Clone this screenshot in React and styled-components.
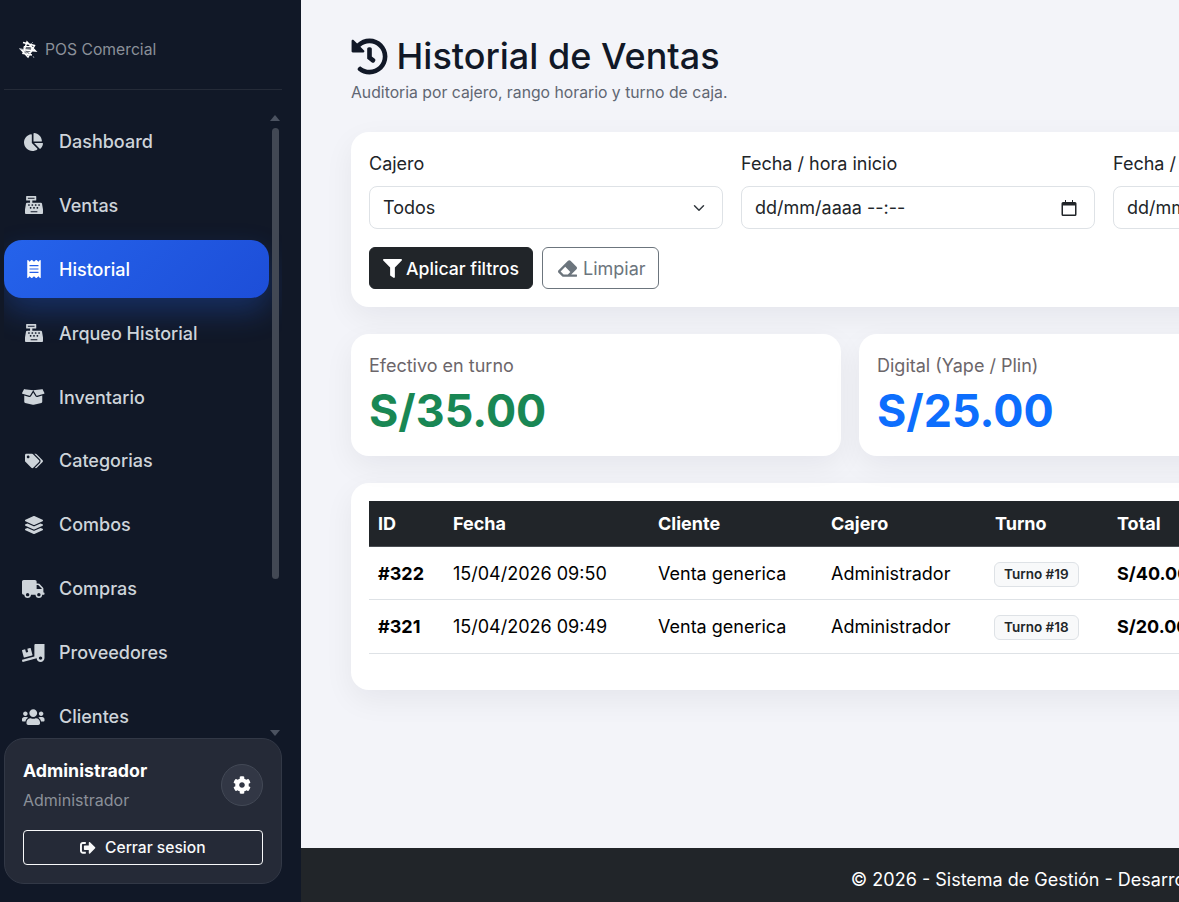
import React from 'react';
import styled, { createGlobalStyle } from 'styled-components';
import {
  FaChartPie, FaCashRegister, FaReceipt, FaBoxOpen, FaTags, FaLayerGroup, FaTruck,
  FaTruckLoading, FaUsers, FaCog, FaSignOutAlt, FaFilter, FaEraser, FaHistory,
} from 'react-icons/fa';

const GlobalStyle = createGlobalStyle`
  * { box-sizing: border-box; }
  html, body { margin: 0; height: 100%; overflow: hidden; }
  body {
    font-family: Inter, "Liberation Sans", sans-serif;
    font-size: 18px;
    background: #f3f4f9;
    color: #212529;
  }
  #root { height: 100vh; overflow: hidden; }
`;

const Shell = styled.div`
  display: flex;
  width: 1907px;
  height: 902px;
`;

const Sidebar = styled.aside`
  width: 301px;
  flex-shrink: 0;
  height: 100%;
  display: flex;
  flex-direction: column;
  background: #111827;
  padding: 0 19px 18px 4px;
`;

const Brand = styled.div`
  height: 90px;
  flex-shrink: 0;
  display: flex;
  align-items: center;
  gap: 7px;
  padding: 10px 0 0 14px;
  border-bottom: 1px solid #252b38;
  font-size: 15.7px;
  color: #8b9099;
  svg { flex-shrink: 0; }
`;

const NavArea = styled.div`
  position: relative;
  flex: 1;
  min-height: 0;
`;

const NavList = styled.nav`
  height: 100%;
  overflow: hidden;
  padding: 22.6px 13px 0 0;
  display: flex;
  flex-direction: column;
  gap: 6px;
`;

const NavItem = styled.a`
  flex-shrink: 0;
  height: 57.9px;
  display: flex;
  align-items: center;
  gap: 15px;
  padding-left: 19px;
  border-radius: 18px;
  font-size: 18px;
  font-weight: 500;
  color: ${(props) => (props.$active ? '#ffffff' : '#ced4da')};
  background: ${(props) => (props.$active ? 'linear-gradient(135deg, #2563eb, #1d4ed8)' : 'transparent')};
  box-shadow: ${(props) => (props.$active ? '0 14px 30px rgba(37, 99, 235, 0.3)' : 'none')};
`;

const NavIcon = styled.span`
  width: 21px;
  display: flex;
  justify-content: center;
  svg { flex-shrink: 0; height: 18px; width: ${(props) => props.$w || 18}px; }
`;

const ScrollArrow = styled.span`
  position: absolute;
  right: 2px;
  top: ${(props) => (props.$down ? '640px' : '25px')};
  width: 0;
  height: 0;
  border-left: 5px solid transparent;
  border-right: 5px solid transparent;
  border-${(props) => (props.$down ? 'top' : 'bottom')}: 6px solid #4b5260;
`;

const ScrollThumb = styled.span`
  position: absolute;
  right: 3px;
  top: 38px;
  width: 7px;
  height: 451px;
  border-radius: 4px;
  background: #424854;
`;

const UserCard = styled.div`
  flex-shrink: 0;
  height: 146px;
  padding: 21px 18px 18px;
  border: 1px solid #323846;
  border-radius: 20px;
  background: #252a37;
`;

const UserRow = styled.div`
  display: flex;
  justify-content: space-between;
  align-items: center;
  margin-bottom: 20px;
`;

const UserName = styled.div`
  font-size: 17.8px;
  font-weight: 700;
  color: #ffffff;
  margin-bottom: 9px;
`;

const UserRole = styled.div`
  font-size: 16px;
  color: #8b9099;
`;

const GearButton = styled.span`
  width: 42px;
  height: 42px;
  display: flex;
  align-items: center;
  justify-content: center;
  border: 1px solid #434956;
  border-radius: 50%;
  background: #323745;
  color: #ffffff;
  font-size: 18px;
`;

const LogoutButton = styled.button`
  width: 100%;
  height: 35px;
  display: flex;
  align-items: center;
  justify-content: center;
  gap: 9px;
  border: 1px solid #f8f9fa;
  border-radius: 4px;
  background: transparent;
  color: #f8f9fa;
  font: 500 15.6px Inter, sans-serif;
`;

const Main = styled.main`
  flex: 1;
  min-width: 0;
  display: flex;
  flex-direction: column;
`;

const Content = styled.div`
  flex: 1;
  padding: 32px 50px 0;
`;

const Title = styled.h1`
  margin: 0;
  display: flex;
  align-items: center;
  gap: 9px;
  font-size: 36px;
  line-height: 49px;
  font-weight: 500;
  color: #111827;
  svg { width: 37px; height: 37px; margin-left: -0.5px; }
`;

const Subtitle = styled.p`
  margin: 0 0 27px;
  font-size: 15.75px;
  line-height: 24px;
  color: #5f6672;
`;

const Card = styled.section`
  background: #ffffff;
  border-radius: 18px;
  padding: 18px;
  box-shadow: 0 10px 30px rgba(15, 23, 42, 0.06);
`;

const FilterCard = styled(Card)`
  margin-bottom: 27px;
`;

const StatCard = styled(Card)`
  padding-bottom: 14px;
`;

const FilterGrid = styled.div`
  display: grid;
  grid-template-columns: repeat(4, 354px);
  gap: 18px;
  margin-bottom: 18px;
`;

const Label = styled.label`
  display: block;
  font-size: 18px;
  line-height: 27px;
  margin-bottom: 9px;
  color: #212529;
`;

const Select = styled.select`
  width: 100%;
  height: 43px;
  padding: 0 13px;
  appearance: none;
  border: 1px solid #dee2e6;
  border-radius: 8px;
  color: #212529;
  font: 400 18px Inter, sans-serif;
  background: #ffffff url("data:image/svg+xml,%3csvg xmlns='http://www.w3.org/2000/svg' viewBox='0 0 16 16'%3e%3cpath fill='none' stroke='%23343a40' stroke-linecap='round' stroke-linejoin='round' stroke-width='2' d='m2 5 6 6 6-6'/%3e%3c/svg%3e") no-repeat right 15px center / 16px 12px;
`;

const DateField = styled.div`
  height: 43px;
  display: flex;
  align-items: center;
  justify-content: space-between;
  padding: 0 17px 0 13px;
  border: 1px solid #dee2e6;
  border-radius: 8px;
  font-size: 18px;
  color: #212529;
  white-space: nowrap;
`;

const Actions = styled.div`
  display: flex;
  gap: 9px;
`;

const Button = styled.button`
  height: 42px;
  display: flex;
  align-items: center;
  gap: ${(props) => (props.$outline ? 6 : 4)}px;
  padding: ${(props) => (props.$outline ? '0 12px 0 15px' : '0 13px')};
  border: 1px solid ${(props) => (props.$outline ? '#6c757d' : '#212529')};
  border-radius: 6px;
  background: ${(props) => (props.$outline ? 'transparent' : '#212529')};
  color: ${(props) => (props.$outline ? '#6c757d' : '#ffffff')};
  font: ${(props) => (props.$outline ? '400 18px' : '500 17.7px')} Inter, sans-serif;
  svg { width: 19px; height: 19px; }
`;

const StatGrid = styled.div`
  display: grid;
  grid-template-columns: repeat(3, 490px);
  gap: 18px;
  margin-bottom: 27px;
`;

const StatLabel = styled.div`
  font-size: 18px;
  line-height: 28px;
  color: #6c666a;
`;

const StatValue = styled.div`
  font-size: 44.8px;
  line-height: 62px;
  font-weight: 700;
  color: ${(props) => props.$color};
`;

const Table = styled.table`
  width: 100%;
  border-collapse: collapse;
  table-layout: fixed;
  margin-bottom: 18px;
  font-size: 18px;
`;

const Th = styled.th`
  width: ${(props) => (props.$w ? `${props.$w}px` : 'auto')};
  height: 45px;
  padding: 0 9px;
  text-align: left;
  font-weight: 700;
  color: #ffffff;
  background: #212529;
  border-bottom: 1px solid #4a4e53;
`;

const Td = styled.td`
  height: ${(props) => props.$h}px;
  padding: 1px 9px 0;
  color: #000000;
  font-weight: ${(props) => (props.$bold ? 700 : 400)};
  border-bottom: 1px solid #dee2e6;
  white-space: nowrap;
`;

const Badge = styled.span`
  display: inline-block;
  height: 25px;
  line-height: 23px;
  padding: 0 9px;
  margin: 2px 0 0 -1px;
  border: 1px solid #dee2e6;
  border-radius: 6px;
  background: #f8f9fa;
  color: #212529;
  font-size: 13.5px;
  font-weight: 600;
  vertical-align: middle;
`;

const Footer = styled.footer`
  height: 54px;
  flex-shrink: 0;
  display: flex;
  align-items: center;
  justify-content: center;
  padding: 8px 0 0 8px;
  background: #212529;
  color: #ffffff;
  font-size: 18px;
  white-space: nowrap;
`;

const LogoMark = () => (
  <svg width="20" height="20" viewBox="0 0 20 20" fill="none" stroke="#ffffff" strokeWidth="1.5">
    <path d="M5 2.5 16.5 5.5 10 17 3 9.5 17.5 11 9 2 5 13.5 14 15" />
    <path d="M6 6.5h7l1 5-5 2-3-3Z" fill="#ffffff" fillOpacity="0.35" strokeWidth="1" />
    <path d="M1 8.5 6 10M13 4l2-2M15 16l1 2" strokeWidth="0.8" stroke="#9aa0aa" />
  </svg>
);

const CalendarIcon = () => (
  <svg width="16" height="16" viewBox="0 0 16 16" fill="#212529">
    <path d="M4 0h1v2h6V0h1v2h2a1.5 1.5 0 0 1 1.5 1.5v11A1.5 1.5 0 0 1 14 16H2a1.5 1.5 0 0 1-1.5-1.5v-11A1.5 1.5 0 0 1 2 2h2V0Zm-2 5.5v9h12v-9H2Z" />
  </svg>
);

const navLinks = [
  { label: 'Dashboard', icon: FaChartPie, w: 19 },
  { label: 'Ventas', icon: FaCashRegister },
  { label: 'Historial', icon: FaReceipt, active: true },
  { label: 'Arqueo Historial', icon: FaCashRegister },
  { label: 'Inventario', icon: FaBoxOpen, w: 22.5 },
  { label: 'Categorias', icon: FaTags },
  { label: 'Combos', icon: FaLayerGroup },
  { label: 'Compras', icon: FaTruck, w: 22.5 },
  { label: 'Proveedores', icon: FaTruckLoading, w: 22.5 },
  { label: 'Clientes', icon: FaUsers, w: 22.5 },
];

const sales = [
  { id: '#322', date: '15/04/2026 09:50', shift: 'Turno #19', total: 'S/40.00', h: 53 },
  { id: '#321', date: '15/04/2026 09:49', shift: 'Turno #18', total: 'S/20.00', h: 54 },
];

const App = () => {
  return (
    <Shell>
      <GlobalStyle />
      <Sidebar>
        <Brand>
          <LogoMark />
          POS Comercial
        </Brand>
        <NavArea>
          <NavList>
            {navLinks.map(({ label, icon: Icon, active, w }) => (
              <NavItem key={label} $active={active}>
                <NavIcon $w={w}><Icon /></NavIcon>
                {label}
              </NavItem>
            ))}
          </NavList>
          <ScrollArrow />
          <ScrollThumb />
          <ScrollArrow $down />
        </NavArea>
        <UserCard>
          <UserRow>
            <div>
              <UserName>Administrador</UserName>
              <UserRole>Administrador</UserRole>
            </div>
            <GearButton><FaCog /></GearButton>
          </UserRow>
          <LogoutButton><FaSignOutAlt /> Cerrar sesion</LogoutButton>
        </UserCard>
      </Sidebar>

      <Main>
        <Content>
          <Title><FaHistory /> Historial de Ventas</Title>
          <Subtitle>Auditoria por cajero, rango horario y turno de caja.</Subtitle>

          <FilterCard>
            <FilterGrid>
              <div>
                <Label>Cajero</Label>
                <Select defaultValue="todos">
                  <option value="todos">Todos</option>
                </Select>
              </div>
              <div>
                <Label>Fecha / hora inicio</Label>
                <DateField>dd/mm/aaaa --:-- <CalendarIcon /></DateField>
              </div>
              <div>
                <Label>Fecha / hora fin</Label>
                <DateField>dd/mm/aaaa --:-- <CalendarIcon /></DateField>
              </div>
            </FilterGrid>
            <Actions>
              <Button><FaFilter /> Aplicar filtros</Button>
              <Button $outline><FaEraser /> Limpiar</Button>
            </Actions>
          </FilterCard>

          <StatGrid>
            <StatCard>
              <StatLabel>Efectivo en turno</StatLabel>
              <StatValue $color="#198754">S/35.00</StatValue>
            </StatCard>
            <StatCard>
              <StatLabel>Digital (Yape / Plin)</StatLabel>
              <StatValue $color="#0d6efd">S/25.00</StatValue>
            </StatCard>
          </StatGrid>

          <Card>
            <Table>
              <thead>
                <tr>
                  <Th $w={75}>ID</Th>
                  <Th $w={205}>Fecha</Th>
                  <Th $w={173}>Cliente</Th>
                  <Th $w={164}>Cajero</Th>
                  <Th $w={122}>Turno</Th>
                  <Th>Total</Th>
                </tr>
              </thead>
              <tbody>
                {sales.map((sale) => (
                  <tr key={sale.id}>
                    <Td $h={sale.h} $bold>{sale.id}</Td>
                    <Td $h={sale.h}>{sale.date}</Td>
                    <Td $h={sale.h}>Venta generica</Td>
                    <Td $h={sale.h}>Administrador</Td>
                    <Td $h={sale.h}><Badge>{sale.shift}</Badge></Td>
                    <Td $h={sale.h} $bold>{sale.total}</Td>
                  </tr>
                ))}
              </tbody>
            </Table>
          </Card>
        </Content>
        <Footer>© 2026 - Sistema de Gestión - Desarrollado por Equipo POS</Footer>
      </Main>
    </Shell>
  );
};

export default App;
